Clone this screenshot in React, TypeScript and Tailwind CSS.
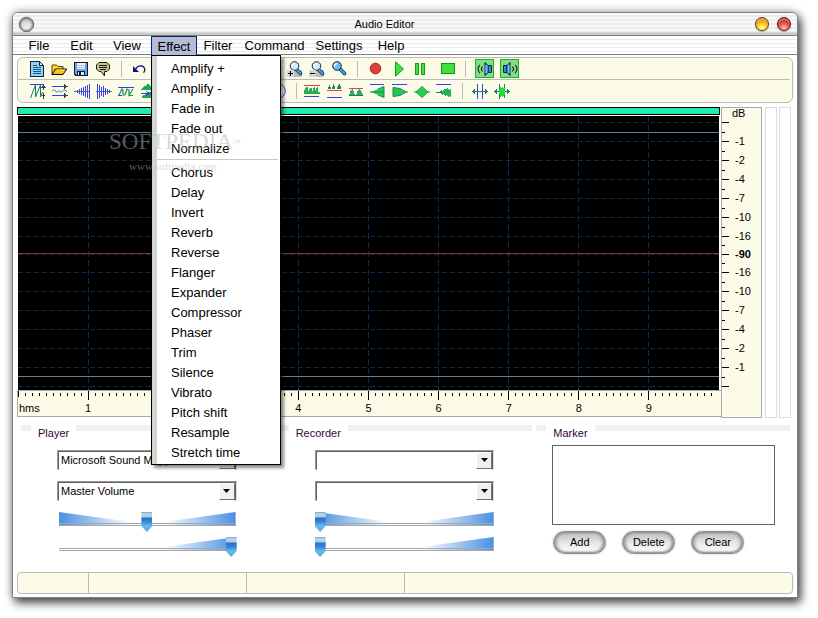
import type { ReactNode } from "react";

const menus = [
  { label: "File", width: "w-[42px]" },
  { label: "Edit", width: "w-[43px]" },
  { label: "View", width: "w-[48px]" },
  { label: "Effect", width: "w-[46px]" },
  { label: "Filter", width: "w-[42px]" },
  { label: "Command", width: "w-[71px]" },
  { label: "Settings", width: "w-[58px]" },
  { label: "Help", width: "w-[46px]" },
];

const levelEffects = ["Amplify +", "Amplify -", "Fade in", "Fade out", "Normalize"];
const otherEffects = [
  "Chorus", "Delay", "Invert", "Reverb", "Reverse", "Flanger", "Expander", "Compressor",
  "Phaser", "Trim", "Silence", "Vibrato", "Pitch shift", "Resample", "Stretch time",
];

const dbMarks = [
  { y: 14, label: "" }, { y: 33, label: "-1" }, { y: 52, label: "-2" }, { y: 71, label: "-4" },
  { y: 90, label: "-7" }, { y: 109, label: "-10" }, { y: 128, label: "-16" }, { y: 146, label: "-90" },
  { y: 164, label: "-16" }, { y: 183, label: "-10" }, { y: 202, label: "-7" }, { y: 221, label: "-4" },
  { y: 240, label: "-2" }, { y: 259, label: "-1" }, { y: 278, label: "" },
];

const seconds = [1, 2, 3, 4, 5, 6, 7, 8, 9];

function Icon({ children, smooth }: { children: ReactNode; smooth?: boolean }) {
  return (
    <svg width="16" height="16" viewBox="0 0 16 16" fill="none" shapeRendering={smooth ? "auto" : "crispEdges"} aria-hidden="true">
      {children}
    </svg>
  );
}

function Tool({ label, width = "w-[22px]", children }: { label: string; width?: string; children?: ReactNode }) {
  return (
    <button type="button" aria-label={label} className={`flex h-5 shrink-0 items-center justify-center ${width}`}>
      {children}
    </button>
  );
}

function Separator({ width = "w-[14px]" }: { width?: string }) {
  return (
    <span className={`flex shrink-0 justify-center ${width}`}>
      <span className="h-4 w-px bg-[#b9b9b9]" />
    </span>
  );
}

function Magnifier({ sign }: { sign?: "+" | "-" }) {
  return (
    <Icon smooth>
      {sign && <rect x="0" y="9" width="15" height="7" rx="1" fill="#bcbcbc" />}
      <path d="M9.500 8.500 13.500 12.500" stroke="#103050" strokeWidth="3.600" strokeLinecap="round" />
      <path d="M9.500 8.500 13.500 12.500" stroke="#3aa8f0" strokeWidth="2" strokeLinecap="round" />
      <circle cx={sign ? 7.5 : 6} cy="5" r="4.300" fill={sign ? "#d4eaf8" : "#6cbcf4"} stroke="#182838" />
      <path d={sign ? "M5 5.500a2.600 2.600 0 0 1 2.500-2.800" : "M3.500 5.500a2.600 2.600 0 0 1 2.500-2.800"} stroke="#fff" strokeWidth="1.400" />
      {sign && <rect x="0" y="9" width="7" height="7" fill="#d6d6d6" />}
      {sign && <path d="M1 12.500h5" stroke="#000" />}
      {sign === "+" && <path d="M3.500 10v5" stroke="#000" />}
    </Icon>
  );
}

function Speaker({ flip }: { flip?: boolean }) {
  return (
    <Icon smooth>
      <g transform={flip ? "matrix(-1 0 0 1 16 0)" : undefined}>
        <path d="M8 1.500 11 4.500h3.500v7H11l-3 3z" fill="#2b8de0" stroke="#0a2038" />
        <path d="M9.200 4v8" stroke="#7cc8ff" strokeWidth="1.400" />
        <path d="M11.500 5v6" stroke="#0a3e78" />
        <path d="M3 3.800C.4 6.200 .4 9.800 3 12.200M5.700 5.700c-1.700 1.500-1.700 3.100 0 4.600" stroke="#123" strokeWidth="1.100" />
      </g>
    </Icon>
  );
}

function FileTools() {
  return (
    <div className="flex h-[21px] items-center overflow-hidden pl-2">
      <Tool label="New">
        <Icon>
          <path d="M1.500 .5h8.500l4 4v11H1.500z" fill="#8fd0f8" stroke="#08283f" />
          <path d="M10 .5v4h4" fill="#e6f6ff" stroke="#08283f" />
          <path d="M4 4.500h4M4 6.500h8M4 8.500h8M4 10.500h8M4 12.500h8" stroke="#1b5a8c" />
        </Icon>
      </Tool>
      <Tool label="Open">
        <Icon smooth>
          <path d="M1 13.500V4h4.500l1.500 1.500h5V8" fill="#ffd23c" stroke="#5c3a00" />
          <path d="M1 13.500 4.500 8h11.200L12 13.500z" fill="#ffbf10" stroke="#000" />
          <path d="M5.300 9h8.500" stroke="#fff07a" />
        </Icon>
      </Tool>
      <Tool label="Save">
        <Icon>
          <path d="M1.500 1.500h13v13H3l-1.500-1.500z" fill="#6fa4e4" stroke="#0a1e4a" />
          <path d="M4 2h8v6H4z" fill="#eef4fb" />
          <path d="M4 4.500h8M4 6.500h8" stroke="#b7cbe2" />
          <path d="M4.500 10.500h7v4h-7z" fill="#dce6f2" stroke="#0a1e4a" />
          <path d="M6 11h2v3H6z" fill="#0a1e4a" />
        </Icon>
      </Tool>
      <Tool label="Comment">
        <Icon smooth>
          <path d="M4 1.500h8l2.500 2.500v4L12 10.500H9.500v4.500L6 10.500H4L1.500 8V4z" fill="#c4c498" stroke="#1c1c0c" />
          <path d="M4 4.500h8M4 6.500h8M5 8.500h6" stroke="#1c1c0c" shapeRendering="crispEdges" />
        </Icon>
      </Tool>
      <Separator />
      <Tool label="Undo">
        <Icon smooth>
          <path d="M4 9.500C5.500 6 8 4.500 11 5c3 .7 3.600 4.500 1.600 6.800" stroke="#101080" strokeWidth="1.300" />
          <path d="M2 5v6h6z" fill="#101080" />
        </Icon>
      </Tool>
      <Tool label="Redo">
        <Icon smooth>
          <path d="M12 9.500C10.500 6 8 4.500 5 5c-3 .7-3.600 4.500-1.600 6.800" stroke="#101080" strokeWidth="1.300" />
          <path d="M14 5v6H8z" fill="#101080" />
        </Icon>
      </Tool>
      <Tool label="Cut" />
      <Tool label="Copy" />
      <Tool label="Paste" />
      <Tool label="Delete" />
      <Separator width="w-[24px]" />
      <Tool label="Zoom in"><Magnifier sign="+" /></Tool>
      <Tool label="Zoom out"><Magnifier sign="-" /></Tool>
      <Tool label="Zoom"><Magnifier /></Tool>
      <Separator />
      <Tool label="Record" width="w-[24px]">
        <Icon smooth><circle cx="7.500" cy="7.500" r="5.300" fill="#e0403a" stroke="#a81c1c" /></Icon>
      </Tool>
      <Tool label="Play">
        <Icon smooth><path d="M4.500 .8v14.400L12.500 8z" fill="#3fe03f" stroke="#109a18" /></Icon>
      </Tool>
      <Tool label="Pause">
        <Icon><path d="M2.500 2.500h3v11h-3zM8.500 2.500h3v11h-3z" fill="#3fe03f" stroke="#109a18" /></Icon>
      </Tool>
      <Tool label="Stop" width="w-[32px]">
        <Icon><path d="M1.500 2.500h13v10h-13z" fill="#3fe03f" stroke="#109a18" /></Icon>
      </Tool>
      <Separator width="w-[2px]" />
      <div className="ml-[9px] flex gap-[6px]">
        <button type="button" aria-label="Left channel" aria-pressed="true" className="flex size-[19px] items-center justify-center border border-[#18b818] bg-[#84dc84]">
          <Speaker />
        </button>
        <button type="button" aria-label="Right channel" aria-pressed="true" className="flex size-[19px] items-center justify-center border border-[#18b818] bg-[#84dc84]">
          <Speaker flip />
        </button>
      </div>
    </div>
  );
}

function EffectTools() {
  return (
    <div className="flex h-[22px] items-center overflow-hidden pl-[9px]">
      <Tool label="Amplify">
        <Icon>
          <path d="M0 1.500h14" stroke="#3c3cf0" />
          <path d="M.5 15 5.500 2v12L10.500 2M10.500 2v12l2-5" stroke="#1d7a66" shapeRendering="auto" />
          <path d="M11 4.500h5M13.500 1v6M12 3.500h3M12 12.500h3M13.500 10v6" stroke="#404040" />
        </Icon>
      </Tool>
      <Tool label="Envelope">
        <Icon>
          <path d="M0 3.500h12M0 12.500h12" stroke="#3c3cf0" />
          <path d="M12 1v5l4-2.500zM12 10v5l4-2.500z" fill="#404040" />
          <path d="M0 8.500 2 6.500l3 3 2-2 2 2 3-3 3 2" stroke="#1d8a76" shapeRendering="auto" />
        </Icon>
      </Tool>
      <Tool label="Fade in">
        <Icon>
          <path d="M0 8.500h16" stroke="#1d8a96" />
          <path d="M3.500 7v3M5.500 6v5M7.500 5v7M9.500 4v9M11.500 3v11M13.500 2v13M15.500 1v15" stroke="#3c3cf0" />
        </Icon>
      </Tool>
      <Tool label="Fade out">
        <Icon>
          <path d="M0 8.500h16" stroke="#1d8a96" />
          <path d="M1.500 1v15M3.500 2v13M5.500 4v9M7.500 3v11M9.500 5v7M11.500 6v5M13.500 7v3" stroke="#3c3cf0" />
        </Icon>
      </Tool>
      <Tool label="Normalize">
        <Icon>
          <path d="M0 4.500h16M0 12.500h4" stroke="#3c3cf0" />
          <path d="M1 12 4 6l1 1v5h2l2-6 2 1v5l4-6M11 12.500h4" stroke="#1d8a55" shapeRendering="auto" strokeWidth="1.200" />
        </Icon>
      </Tool>
      <Tool label="Reverse">
        <Icon>
          <path d="M1 6.500 8 .5l7 6zM9 9h5v6H2v-2z" fill="#22a852" />
          <path d="M1 10.500h7M6 8l3 2.500L6 13" stroke="#3c3cf0" />
        </Icon>
      </Tool>
      <Tool label="Chorus" />
      <Tool label="Delay" />
      <Tool label="Reverb" />
      <Tool label="Flanger" />
      <Tool label="Phaser" />
      <Tool label="Vibrato">
        <Icon smooth><path d="M9.500 1.500c5 3.500 5 9.500 0 13" stroke="#3c3cf0" /></Icon>
      </Tool>
      <Separator width="w-[10px]" />
      <Tool label="Low pass">
        <Icon>
          <path d="M0 11V8l2-4h2v5l2-4h2v4l2-5h1v4l2-4h1v5l2 0v2z" fill="#22b058" />
          <path d="M0 2.500h16" stroke="#f04040" />
          <path d="M0 13.500h15" stroke="#3c3cf0" />
        </Icon>
      </Tool>
      <Tool label="High pass">
        <Icon>
          <path d="M2 6 3 2l1-1 1 5zM6 6l2-6 1 6zM11 6l1-3 2-3 1 6z" fill="#1d8a50" />
          <path d="M1 7.500h15" stroke="#f04040" />
          <path d="M1 14.500h15" stroke="#3c3cf0" />
        </Icon>
      </Tool>
      <Tool label="Band pass">
        <Icon>
          <path d="M1 12 3 7l2-1 2 6zM8 12l2-5 2-1 3 6z" fill="#22b058" />
          <path d="M1 5.500h14" stroke="#f04040" />
          <path d="M1 12.500h14" stroke="#1d7a66" />
        </Icon>
      </Tool>
      <Tool label="Expand">
        <Icon smooth>
          <path d="M0 1.500h14" stroke="#3c3cf0" />
          <path d="M1 9 14 3.500v11z" fill="#22c858" />
          <path d="M0 9h14M8 6l6-2.500v11L8 12" stroke="#1d8a56" />
        </Icon>
      </Tool>
      <Tool label="Compress">
        <Icon smooth>
          <path d="M0 1.500h15" stroke="#3c3cf0" />
          <path d="M1 4.500l7 1 6 3.500-6 3.500-7 1z" fill="#22c858" stroke="#1d8a56" />
          <path d="M12 9h4" stroke="#1d7a66" />
        </Icon>
      </Tool>
      <Tool label="Gate">
        <Icon smooth>
          <path d="M2 9 8 3.500 14 9 8 14.500z" fill="#22d04a" stroke="#1d9a56" />
          <path d="M0 9h3M13 9h3" stroke="#1d7a66" />
        </Icon>
      </Tool>
      <Tool label="Limiter">
        <Icon>
          <path d="M0 1.500h15" stroke="#3c3cf0" />
          <path d="M3 9l3-3v2l2-2 1-1 1 2 2-3 1 3 2-1v8l-2-1-1 1-1-2-2 1-2-2-1 1z" fill="#22b058" />
          <path d="M0 9.500h6" stroke="#1d7a66" />
        </Icon>
      </Tool>
      <Separator />
      <Tool label="Trim">
        <Icon>
          <path d="M5.500 1v15M10.500 1v15" stroke="#3c3cf0" />
          <path d="M0 8.500h16M2.500 6v5M13.500 6v5M1.500 7v3M14.500 7v3" stroke="#1d7a76" />
        </Icon>
      </Tool>
      <Tool label="Stretch">
        <Icon>
          <path d="M0 8.500h16M2.500 6v5M13.500 6v5M1.500 7v3M14.500 7v3" stroke="#1d7a76" />
          <path d="M5 4h2v3l1-4 2 3v-2h1v10h-1v-3l-1 4-2-3v2H5z" fill="#1ee03c" />
          <path d="M5.500 1v5M5.500 11v5M10.500 1v4M10.500 12v3" stroke="#1d8a50" />
        </Icon>
      </Tool>
    </div>
  );
}

function WaveView() {
  return (
    <svg className="h-[274px] w-full bg-black" shapeRendering="crispEdges" role="img" aria-label="Waveform">
      {dbMarks.map((mark) => (
        <line key={mark.y} x1="0" x2="100%" y1={mark.y - 7.5} y2={mark.y - 7.5} stroke="#062c50" strokeDasharray="5 3" />
      ))}
      {seconds.map((s) => (
        <line key={s} x1={`${s * 10}%`} x2={`${s * 10}%`} y1="0" y2="274" stroke="#062c50" strokeDasharray="6 3" />
      ))}
      <line x1="0" x2="100%" y1="16.500" y2="16.500" stroke="#66809c" />
      <line x1="0" x2="100%" y1="260.500" y2="260.500" stroke="#66809c" />
      <line x1="0" x2="100%" y1="137.500" y2="137.500" stroke="#9c2626" />
    </svg>
  );
}

function TimeRuler() {
  const ticks = Array.from({ length: 100 }, (_, i) => i);
  return (
    <svg className="h-[25px] w-full text-[11px]" role="img" aria-label="Time in seconds">
      <g shapeRendering="crispEdges">
        {ticks.map((i) => (
          <line key={i} x1={`${i}%`} x2={`${i}%`} y1={i % 10 ? 2 : 0} y2={i % 10 ? 5 : i ? 9 : 6} stroke="#000" />
        ))}
      </g>
      <text x="1" y="21">hms</text>
      {seconds.map((s) => (
        <text key={s} x={`${s * 10}%`} y="21" textAnchor="middle">{s}</text>
      ))}
    </svg>
  );
}

function DecibelScale() {
  return (
    <svg className="h-[309px] w-full text-[11px]" role="img" aria-label="Level in decibels">
      <text x="10" y="9">dB</text>
      <g shapeRendering="crispEdges">
        {dbMarks.map((mark) => (
          <line key={mark.y} x1="0" x2="7" y1={mark.y + 0.5} y2={mark.y + 0.5} stroke="#000" />
        ))}
        {dbMarks.slice(1).map((mark) => (
          <line key={mark.y} x1="0" x2="3" y1={mark.y - 8.5} y2={mark.y - 8.5} stroke="#000" />
        ))}
      </g>
      {dbMarks.map((mark) => (
        <text key={mark.y} x="13" y={mark.y + 4} fontWeight={mark.label === "-90" ? 700 : 400}>{mark.label}</text>
      ))}
    </svg>
  );
}

function GroupTitle({ children }: { children: string }) {
  return (
    <div className="flex h-4 items-start">
      <span className="h-[6px] w-[10px] bg-[#f0f0f0]" />
      <h2 className="px-[7px] text-[11px] leading-4 text-[#380038]">{children}</h2>
      <span className="h-[6px] flex-1 bg-[#f0f0f0]" />
    </div>
  );
}

function Combo({ label, value }: { label: string; value: string }) {
  return (
    <div className="grid h-5 border border-t-[#989898] border-r-[#e0e0e0] border-b-[#e0e0e0] border-l-[#989898]">
      <select
        aria-label={label}
        defaultValue={value}
        className="col-start-1 row-start-1 min-w-0 appearance-none rounded-none border border-[#606060] border-b-white bg-white pl-[2px] text-[11px] text-black outline-none"
      >
        <option>{value}</option>
      </select>
      <span className="pointer-events-none col-start-1 row-start-1 m-px flex w-4 items-center justify-center justify-self-end border border-t-white border-r-[#707070] border-b-[#707070] border-l-white bg-[#f0f0f0]">
        <svg width="7" height="4" viewBox="0 0 7 4" aria-hidden="true"><path d="M0 0h7L3.500 4z" fill="#000" /></svg>
      </span>
    </div>
  );
}

function Slider({ id, label, value, left }: { id: string; label: string; value: number; left?: boolean }) {
  return (
    <div className="grid h-5 grid-cols-1">
      <svg className="col-start-1 row-start-1 h-[15px] w-full" viewBox="0 0 179 15" preserveAspectRatio="none" aria-hidden="true">
        <defs>
          <linearGradient id={`${id}-l`}>
            <stop offset="0" stopColor="#4a90e2" />
            <stop offset="1" stopColor="#ffffff" />
          </linearGradient>
          <linearGradient id={`${id}-r`}>
            <stop offset="0" stopColor="#ffffff" />
            <stop offset="1" stopColor="#4a90e2" />
          </linearGradient>
        </defs>
        {left && <path d="M2 0 74 10v1H2z" fill={`url(#${id}-l)`} />}
        {left && <path d="M2 12h72v1H2z" fill={`url(#${id}-l)`} />}
        <path d="M106 10 178 0v13h-72z" fill={`url(#${id}-r)`} />
        <path d="M2 11.500h176M2 13.500h176" stroke="#a4a8ac" shapeRendering="crispEdges" />
      </svg>
      <input
        type="range"
        aria-label={label}
        defaultValue={value}
        className="col-start-1 row-start-1 h-5 w-full appearance-none bg-transparent outline-none [&::-webkit-slider-thumb]:h-5 [&::-webkit-slider-thumb]:w-[11px] [&::-webkit-slider-thumb]:appearance-none [&::-webkit-slider-thumb]:bg-[linear-gradient(#8aa0b4_0px,#b8d8f0_2px,#a8cdec_5px,#2e6fc0_6px,#3a86dc_10px,#6ab8ec_14px,#58a8d8_20px)] [&::-webkit-slider-thumb]:[clip-path:polygon(0_0,100%_0,100%_70%,50%_100%,0_70%)]"
      />
    </div>
  );
}

function DevicePanel({ title, device, source, levels }: { title: string; device: string; source: string; levels: number[] }) {
  return (
    <section>
      <GroupTitle>{title}</GroupTitle>
      <div className="mt-[9px] mr-[38px] ml-9 flex flex-col gap-[11px]">
        <Combo label={`${title} device`} value={device} />
        <Combo label={`${title} source`} value={source} />
        <div className="flex flex-col gap-[5px]">
          <Slider id={`${title}-balance`} label={`${title} balance`} value={levels[0]} left />
          <Slider id={`${title}-volume`} label={`${title} volume`} value={levels[1]} />
        </div>
      </div>
    </section>
  );
}

function PillButton({ children }: { children: string }) {
  return (
    <button
      type="button"
      className="h-[23px] w-[53px] rounded-full border border-[#8c8c8c] bg-linear-to-b from-[#bcbcbc] via-[#e6e6e6] to-white text-[11px] text-black shadow-[inset_0_0_2px_1px_#8c8c8c,inset_3px_0_3px_#b0b0b0,inset_-3px_0_3px_#b0b0b0,0_0_2px_#c0c0c0]"
    >
      {children}
    </button>
  );
}

function MenuItem({ children }: { children: string }) {
  return (
    <li role="none">
      <button type="button" role="menuitem" className="block h-5 w-full pl-[14px] text-left text-[13px] leading-5">
        {children}
      </button>
    </li>
  );
}

function MenuBar() {
  return (
    <nav className="flex h-[19px] border-b border-[#808080] bg-[repeating-linear-gradient(#ffffff_0px,#ffffff_3px,#e8ecee_3px,#e8ecee_4px)] pl-[5px]">
      {menus.map((menu) =>
        menu.label === "Effect" ? (
          <div key={menu.label} className={`relative h-[19px] ${menu.width}`}>
            <button type="button" aria-expanded="true" className="flex h-[19px] w-full items-center justify-center border border-b-0 border-[#0a246a] bg-[#b4bcd6] pt-px text-[13px] leading-[18px]">
              {menu.label}
            </button>
            <ul role="menu" className="absolute top-full left-0 z-10 w-[130px] border border-black bg-linear-to-r from-[#d0d6cf] from-[5px] to-white to-[5px] pt-[3px] pb-px pl-[5px] shadow-[3px_3px_3px_rgba(0,0,0,0.45)]">
              {levelEffects.map((name) => <MenuItem key={name}>{name}</MenuItem>)}
              <li role="separator" className="mr-[2px] mb-[3px] h-px bg-[#c8c8c8]" />
              {otherEffects.map((name) => <MenuItem key={name}>{name}</MenuItem>)}
            </ul>
          </div>
        ) : (
          <button key={menu.label} type="button" className={`flex h-[19px] items-center justify-center pt-px text-[13px] leading-[18px] ${menu.width}`}>
            {menu.label}
          </button>
        ),
      )}
    </nav>
  );
}

function TitleBar() {
  return (
    <header className="flex h-[23px] items-center rounded-t-[5px] border-b border-[#808080] bg-[linear-gradient(transparent_19px,#c8ccc8_20px),repeating-linear-gradient(#f8f8f8_0px,#f8f8f8_2px,#ececec_2px,#ececec_4px)] px-[6px]">
      <button type="button" aria-label="Window menu" className="size-[15px] rounded-full border border-[#505050] bg-linear-to-b from-[#c4c4c4] to-white shadow-[inset_0_0_2px_1px_#808080,0_0_1px_#808080]" />
      <h1 className="flex-1 pr-[20px] text-center text-[11px]">Audio Editor</h1>
      <div className="flex gap-2">
        <button type="button" aria-label="Minimize" className="size-[14px] rounded-full border border-[#703c10] bg-[radial-gradient(circle_at_50%_85%,#ffff60_15%,#f4a010_60%,#a83800)] shadow-[inset_0_2px_1px_rgba(255,255,255,0.4),0_1px_1px_#a0a0a0]" />
        <button type="button" aria-label="Close" className="size-[14px] rounded-full border border-[#601010] bg-[radial-gradient(circle_at_50%_85%,#ffa898_10%,#dc3838_55%,#800808)] shadow-[inset_0_2px_1px_rgba(255,255,255,0.4),0_1px_1px_#a0a0a0]" />
      </div>
    </header>
  );
}

export default function App() {
  return (
    <div className="min-h-screen overflow-hidden bg-white pt-3 pr-5 pb-5 pl-3 font-['Liberation_Sans',Arial,sans-serif] text-black">
      <main className="rounded-t-md border border-[#808080] bg-white shadow-[0_0_10px_rgba(0,0,0,0.35),3px_5px_10px_rgba(0,0,0,0.65)]">
        <TitleBar />
        <MenuBar />
        <div className="px-1 pt-[2px] pb-[3px]">
          <div className="rounded-md border border-[#b9b9b9] bg-[#fbfbe8]">
            <FileTools />
            <div className="mr-[2px] h-px bg-[#b9b9b9]" />
            <EffectTools />
          </div>

          <div className="mt-1 flex pr-[2px]">
            <div className="relative min-w-0 flex-1">
              <div className="mr-px h-2 border border-black bg-[#20ecac]" />
              <div className="mt-px mr-[2px] ml-px">
                <WaveView />
              </div>
              <div className="border-y border-l border-[#a8a8a8] bg-[#fbfbe8] pr-[2px]">
                <TimeRuler />
              </div>
              <div className="pointer-events-none absolute top-[21px] left-[92px] z-20 font-['Liberation_Serif',serif] text-[#b4b4b4]/50">
                <p className="text-[23px] leading-7">SOFTPEDIA<sup className="text-[8px]">™</sup></p>
                <p className="pl-5 text-[11px] leading-5">www.softpedia.com</p>
              </div>
            </div>
            <div className="w-[41px] border border-[#a8a8a8] bg-[#fbfbe8]">
              <DecibelScale />
            </div>
            <div className="ml-[3px] w-3 border border-[#dcdcdc]" />
            <div className="ml-[2px] w-3 border border-[#dcdcdc]" />
          </div>

          <div className="mt-[7px] mr-[3px] ml-1 grid grid-cols-3 gap-1">
            <DevicePanel title="Player" device="Microsoft Sound Mapper" source="Master Volume" levels={[50, 100]} />
            <DevicePanel title="Recorder" device="" source="" levels={[0, 0]} />
            <section>
              <GroupTitle>Marker</GroupTitle>
              <select aria-label="Markers" size={4} className="mx-4 mt-1 block h-20 w-[calc(100%-31px)] appearance-none rounded-none border border-[#606060] bg-white outline-none" />
              <div className="mt-[6px] ml-[17px] flex gap-4">
                <PillButton>Add</PillButton>
                <PillButton>Delete</PillButton>
                <PillButton>Clear</PillButton>
              </div>
            </section>
          </div>

          <footer className="mt-[15px] flex h-[22px] rounded-[4px] border border-[#b9b9b9] bg-[#fbfbe8]">
            <div className="w-[71px] border-r border-[#b9b9b9]" />
            <div className="w-[158px] border-r border-[#b9b9b9]" />
            <div className="w-[158px] border-r border-[#b9b9b9]" />
          </footer>
        </div>
      </main>
    </div>
  );
}
